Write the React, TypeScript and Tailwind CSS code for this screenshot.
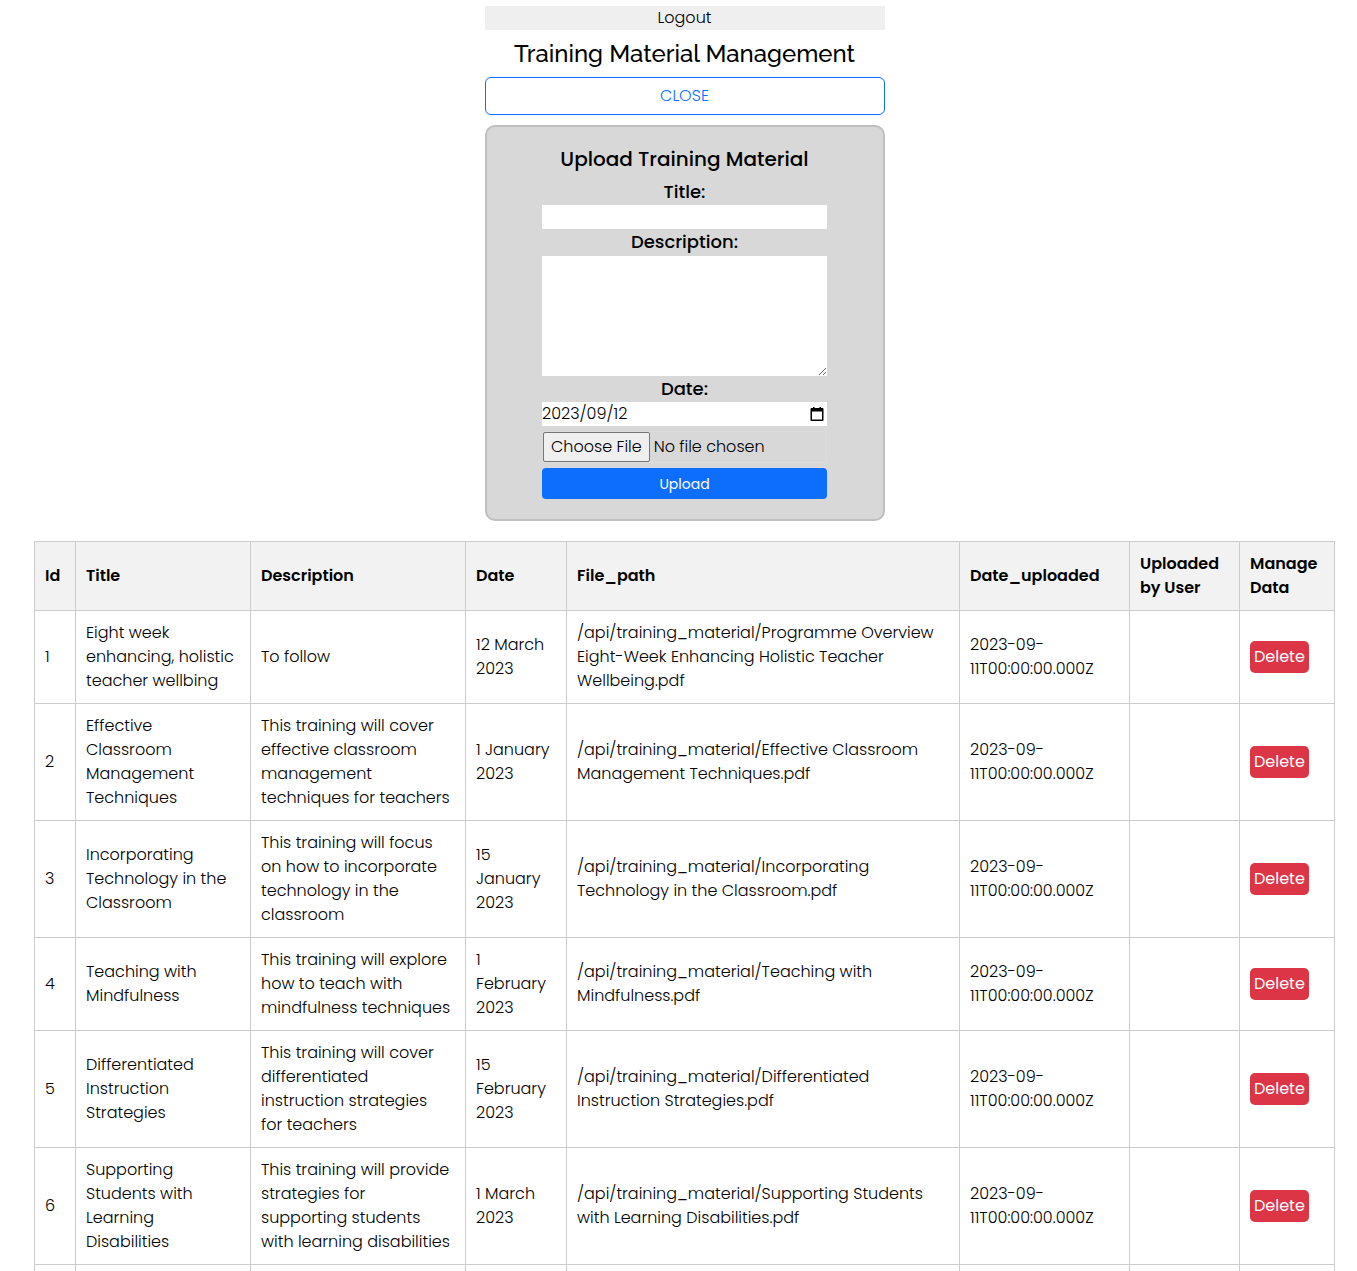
import { Fragment } from "react";

type Row = { id: number; title: string[]; description: string[]; date: string[]; path: string[] };

const rows: Row[] = [
  {
    id: 1,
    title: ["Eight week", "enhancing, holistic", "teacher wellbing"],
    description: ["To follow"],
    date: ["12 March", "2023"],
    path: ["/api/training_material/Programme Overview", "Eight-Week Enhancing Holistic Teacher", "Wellbeing.pdf"],
  },
  {
    id: 2,
    title: ["Effective", "Classroom", "Management", "Techniques"],
    description: ["This training will cover", "effective classroom", "management", "techniques for teachers"],
    date: ["1 January", "2023"],
    path: ["/api/training_material/Effective Classroom", "Management Techniques.pdf"],
  },
  {
    id: 3,
    title: ["Incorporating", "Technology in the", "Classroom"],
    description: ["This training will focus", "on how to incorporate", "technology in the", "classroom"],
    date: ["15", "January", "2023"],
    path: ["/api/training_material/Incorporating", "Technology in the Classroom.pdf"],
  },
  {
    id: 4,
    title: ["Teaching with", "Mindfulness"],
    description: ["This training will explore", "how to teach with", "mindfulness techniques"],
    date: ["1", "February", "2023"],
    path: ["/api/training_material/Teaching with", "Mindfulness.pdf"],
  },
  {
    id: 5,
    title: ["Differentiated", "Instruction", "Strategies"],
    description: ["This training will cover", "differentiated", "instruction strategies", "for teachers"],
    date: ["15", "February", "2023"],
    path: ["/api/training_material/Differentiated", "Instruction Strategies.pdf"],
  },
  {
    id: 6,
    title: ["Supporting", "Students with", "Learning", "Disabilities"],
    description: ["This training will provide", "strategies for", "supporting students", "with learning disabilities"],
    date: ["1 March", "2023"],
    path: ["/api/training_material/Supporting Students", "with Learning Disabilities.pdf"],
  },
];

const headers = [
  ["Id"],
  ["Title"],
  ["Description"],
  ["Date"],
  ["File_path"],
  ["Date_uploaded"],
  ["Uploaded", "by User"],
  ["Manage", "Data"],
];

function Lines({ lines }: { lines: string[] }) {
  return (
    <>
      {lines.map((line, i) => (
        <Fragment key={i}>
          {i > 0 && <br />}
          {line}
        </Fragment>
      ))}
    </>
  );
}

function Cell({ lines }: { lines: string[] }) {
  return (
    <td className="border border-[#cccccc] p-2.5 whitespace-nowrap">
      <Lines lines={lines} />
    </td>
  );
}

export default function App() {
  return (
    <div className="bg-white pt-1.5 pr-[22px] pl-[34px] font-['Poppins','Inter',sans-serif] text-base font-light text-black">
      <div className="mx-auto flex w-full max-w-[400px] flex-col">
        <button type="button" className="h-6 bg-[#efefef] leading-6">
          Logout
        </button>
        <h1 className="py-2 text-center font-['Raleway','Inter',sans-serif] text-2xl leading-[31px] font-medium whitespace-nowrap">
          Training Material Management
        </h1>
        <button type="button" className="h-[38px] rounded-md border border-[#0d6efd] text-[#0d6efd]">
          CLOSE
        </button>

        <form
          className="mt-2.5 flex flex-col items-center rounded-[10px] border-2 border-[#bfbfbf] bg-[#d8d8d8] px-2 py-5"
          onSubmit={(e) => e.preventDefault()}
        >
          <h2 className="mb-2 text-xl leading-6 font-medium">Upload Training Material</h2>
          <label htmlFor="title" className="text-lg leading-[26px] font-medium">
            Title:
          </label>
          <input id="title" type="text" className="h-6 w-3/4 bg-white" />
          <label htmlFor="description" className="text-lg leading-[26px] font-medium">
            Description:
          </label>
          <textarea id="description" className="mt-px block h-[120px] w-3/4 resize bg-white" />
          <label htmlFor="date" className="text-lg leading-[26px] font-medium">
            Date:
          </label>
          <div className="flex h-6 w-3/4 items-center bg-white pr-[3px]">
            <input id="date" type="text" defaultValue="2023/09/12" className="min-w-0 flex-1 bg-transparent leading-6" />
            <button type="button" aria-label="Open calendar">
              <svg width="14" height="16" viewBox="0 0 14 16" className="block">
                <path
                  fill="black"
                  fillRule="evenodd"
                  d="M3 1h1.500v1h5V1H11v1h1.500a1 1 0 0 1 1 1v11a1 1 0 0 1-1 1h-11a1 1 0 0 1-1-1V3a1 1 0 0 1 1-1H3zM2 5.500v8h10v-8z"
                />
              </svg>
            </button>
          </div>
          <input
            type="file"
            aria-label="Training material file"
            className="mt-[5px] h-8 w-3/4 border border-[#dcdcdc] file:mr-1 file:h-[30px] file:rounded-xs file:border file:border-solid file:border-[#767676] file:bg-[#efefef] file:px-[7px] file:font-light"
          />
          <button type="submit" className="mt-[5px] h-[31px] w-3/4 rounded-sm bg-[#0d6efd] text-sm font-normal text-white">
            Upload
          </button>
        </form>
      </div>

      <table className="mt-5 w-full table-fixed border-collapse leading-6">
        <colgroup>
          <col className="w-[41px]" />
          <col className="w-[175px]" />
          <col className="w-[215px]" />
          <col className="w-[101px]" />
          <col />
          <col className="w-[170px]" />
          <col className="w-[110px]" />
          <col className="w-[95px]" />
        </colgroup>
        <thead>
          <tr className="bg-[#f2f2f2]">
            {headers.map((h) => (
              <th key={h[0]} scope="col" className="border border-[#cccccc] p-2.5 text-left font-semibold whitespace-nowrap">
                <Lines lines={h} />
              </th>
            ))}
          </tr>
        </thead>
        <tbody>
          {rows.map((row) => (
            <tr key={row.id}>
              <Cell lines={[String(row.id)]} />
              <Cell lines={row.title} />
              <Cell lines={row.description} />
              <Cell lines={row.date} />
              <Cell lines={row.path} />
              <Cell lines={["2023-09-", "11T00:00:00.000Z"]} />
              <Cell lines={[]} />
              <td className="border border-[#cccccc] px-2.5 py-0">
                <button type="button" className="block h-8 rounded-[5px] bg-[#dc3545] px-1 font-normal text-white">
                  Delete
                </button>
              </td>
            </tr>
          ))}
          <tr className="h-[7px]">
            {headers.map((h) => (
              <td key={h[0]} className="border-x border-[#cccccc] p-0" />
            ))}
          </tr>
        </tbody>
      </table>
    </div>
  );
}
